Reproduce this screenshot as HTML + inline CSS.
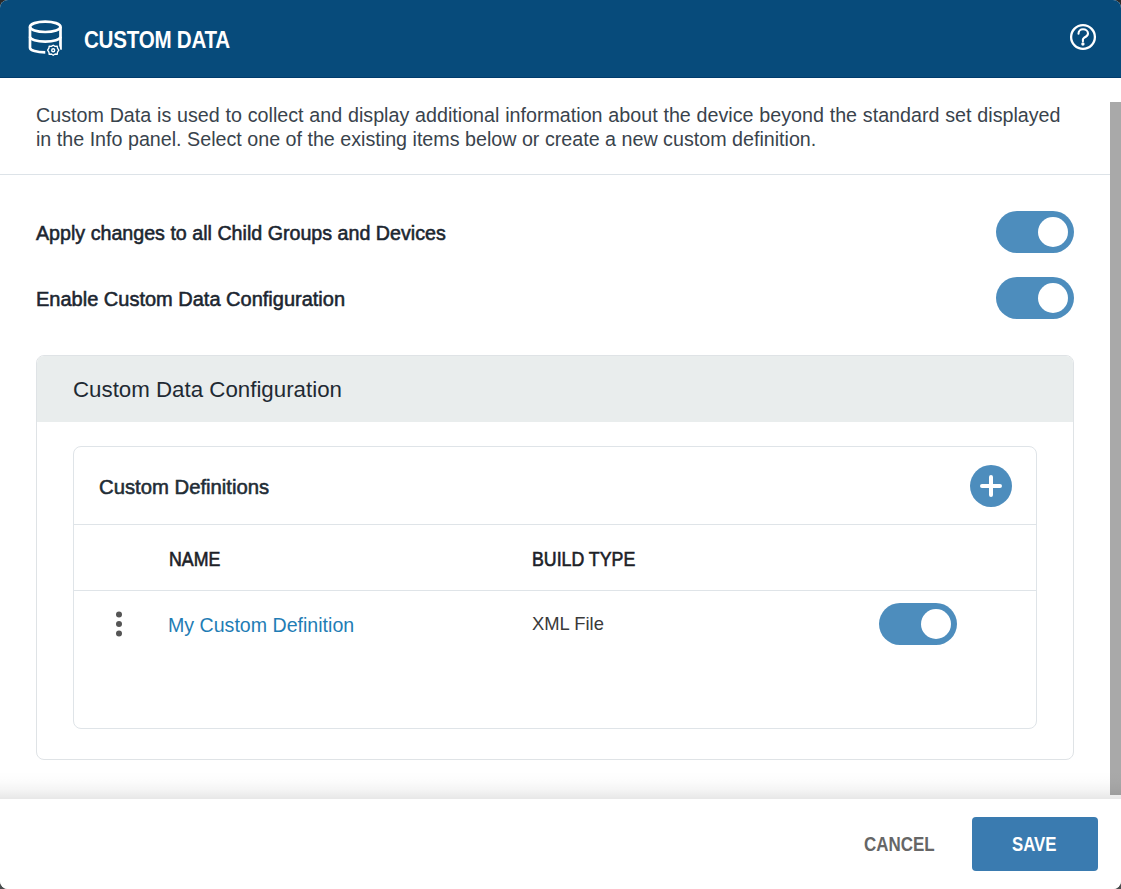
<!DOCTYPE html>
<html><head><meta charset="utf-8">
<style>
html,body{margin:0;padding:0;width:1121px;height:889px;overflow:hidden;background:linear-gradient(to bottom,#2a2a2a 0%,#2a2a2a 50%,#4a4e4e 100%);}
body{font-family:"Liberation Sans",sans-serif;position:relative;}
.dlg{position:absolute;left:0;top:0;width:1121px;height:889px;background:#fff;border-radius:8px;overflow:hidden;}
.hdr{position:absolute;left:0;top:0;width:1121px;height:77px;background:#074b7b;border-bottom:1px solid #013c6c;}
.t{position:absolute;white-space:nowrap;}
.sb{position:absolute;left:1110px;top:102px;width:11px;height:693px;background:#a9a9a9;}
.tog{position:absolute;width:78px;height:42px;border-radius:21px;background:#4d8dbd;}
.tog::after{content:"";position:absolute;right:6px;top:6px;width:30px;height:30px;border-radius:50%;background:#fff;}
.line{position:absolute;height:1px;background:#dfe4e8;}
</style></head><body>
<div class="dlg">
  <div class="hdr">
    <svg style="position:absolute;left:0;top:0" width="80" height="77" viewBox="0 0 80 77">
      <g fill="none" stroke="#fff" stroke-width="2.7">
        <ellipse cx="45.25" cy="26.8" rx="15.25" ry="5.2"/>
        <path d="M30 26.8 V47.7 C30 50.5 37 52.3 45.25 52.3 M60.5 26.8 V49.7"/>
        <path d="M30 36.8 C30 39.6 37 41.6 45.25 41.6 C53.5 41.6 60.5 39.6 60.5 36.8"/>
      </g>
      <circle cx="53.2" cy="50.2" r="7.2" fill="#074b7b"/>
      <g fill="none" stroke="#fff" stroke-width="1.35" stroke-linejoin="round">
        <path d="M53.2 45.2 L55.1 46.4 L57.2 46.1 L57.5 48.2 L58.8 50.2 L57.5 52.2 L57.2 54.3 L55.1 54 L53.2 55.2 L51.3 54 L49.2 54.3 L48.9 52.2 L47.6 50.2 L48.9 48.2 L49.2 46.1 L51.3 46.4 Z"/>
        <circle cx="53.2" cy="50.2" r="1.5"/>
      </g>
    </svg>
    <div class="t" style="left:84px;top:28.5px;font-size:23.6px;line-height:23px;font-weight:bold;color:#fff;letter-spacing:-0.3px;transform:scaleX(0.873);transform-origin:0 0">CUSTOM DATA</div>
    <svg style="position:absolute;left:1069px;top:23px" width="28" height="28" viewBox="0 0 28 28">
      <circle cx="14" cy="14" r="11.9" fill="none" stroke="#fff" stroke-width="2.3"/>
      <path d="M9.5 10.7 C9.5 8 11.5 6.3 14 6.3 C16.8 6.3 19 8.2 19 10.5 C19 13 16.5 14 15 14.8 C14.2 15.3 13.9 15.8 13.9 16.5 V18.3" fill="none" stroke="#fff" stroke-width="2.1" stroke-linecap="round"/>
      <circle cx="13.9" cy="21" r="1.7" fill="#fff"/>
    </svg>
  </div>
  <div class="t" style="left:36px;top:103px;font-size:19.7px;line-height:24px;color:#39434c"><span style="word-spacing:0.33px">Custom Data is used to collect and display additional information about the device beyond the standard set displayed</span><br>in the Info panel. Select one of the existing items below or create a new custom definition.</div>
  <div class="line" style="left:0;top:174px;width:1110px;background:#dde3e8"></div>

  <div class="t" style="left:36px;top:223px;font-size:19.67px;line-height:20px;color:#1c2630;-webkit-text-stroke:0.55px #1c2630">Apply changes to all Child Groups and Devices</div>
  <div class="tog" style="left:996px;top:211px"></div>
  <div class="t" style="left:36px;top:289px;font-size:20px;line-height:20px;color:#1c2630;-webkit-text-stroke:0.55px #1c2630">Enable Custom Data Configuration</div>
  <div class="tog" style="left:996px;top:277px"></div>

  <!-- panel -->
  <div style="position:absolute;left:36px;top:355px;width:1036px;height:403px;border:1px solid #dfe3e6;border-radius:8px;overflow:hidden;background:#fff">
    <div style="position:absolute;left:0;top:0;width:100%;height:66px;background:#e9eded"></div>
  </div>
  <div class="t" style="left:73px;top:379px;font-size:22.3px;line-height:22px;color:#1f2a33">Custom Data Configuration</div>

  <!-- card -->
  <div style="position:absolute;left:73px;top:446px;width:962px;height:281px;border:1px solid #dfe4e8;border-radius:8px;background:#fff"></div>
  <div class="t" style="left:99px;top:477px;font-size:20.3px;line-height:20px;color:#222c35;-webkit-text-stroke:0.55px #222c35">Custom Definitions</div>
  <svg style="position:absolute;left:970px;top:465px" width="42" height="42" viewBox="0 0 42 42">
    <circle cx="21" cy="21" r="21" fill="#4d8dbd"/>
    <path d="M12 21 H30 M21 12 V30" stroke="#fff" stroke-width="4" stroke-linecap="round"/>
  </svg>
  <div class="line" style="left:74px;top:524px;width:962px"></div>
  <div class="t" style="left:169px;top:548.5px;font-size:19.5px;line-height:20px;color:#1c2127;-webkit-text-stroke:0.6px #1c2127;transform:scaleX(0.91);transform-origin:0 0">NAME</div>
  <div class="t" style="left:532px;top:548.5px;font-size:19.5px;line-height:20px;color:#1c2127;-webkit-text-stroke:0.6px #1c2127;transform:scaleX(0.91);transform-origin:0 0">BUILD TYPE</div>
  <div class="line" style="left:74px;top:590px;width:962px"></div>
  <svg style="position:absolute;left:114px;top:609px" width="10" height="30" viewBox="0 0 10 30">
    <circle cx="5" cy="5.5" r="3" fill="#555"/>
    <circle cx="5" cy="15" r="3" fill="#555"/>
    <circle cx="5" cy="24.5" r="3" fill="#555"/>
  </svg>
  <div class="t" style="left:168px;top:616px;font-size:19.6px;line-height:19px;color:#1f7db5">My Custom Definition</div>
  <div class="t" style="left:532px;top:614px;font-size:18.4px;line-height:19.5px;color:#3a3a3a">XML File</div>
  <div class="tog" style="left:879px;top:603px"></div>

  <div class="sb"></div>
  <!-- footer shadow -->
  <div style="position:absolute;left:0;top:771px;width:1121px;height:28px;background:linear-gradient(to bottom,rgba(0,0,0,0) 0%,rgba(0,0,0,0.012) 35%,rgba(0,0,0,0.04) 65%,rgba(0,0,0,0.095) 100%)"></div>
  <div style="position:absolute;left:0;top:799px;width:1121px;height:90px;background:#fff"></div>
  <div class="t" style="left:864px;top:835px;font-size:19.3px;line-height:19px;font-weight:bold;color:#666;transform:scaleX(0.88);transform-origin:0 0">CANCEL</div>
  <div style="position:absolute;left:972px;top:817px;width:126px;height:54px;background:#3a7bb0;border-radius:4px"></div>
  <div class="t" style="left:1012px;top:835px;font-size:19.3px;line-height:19px;font-weight:bold;color:#fff;transform:scaleX(0.87);transform-origin:0 0">SAVE</div>
</div>
</body></html>
